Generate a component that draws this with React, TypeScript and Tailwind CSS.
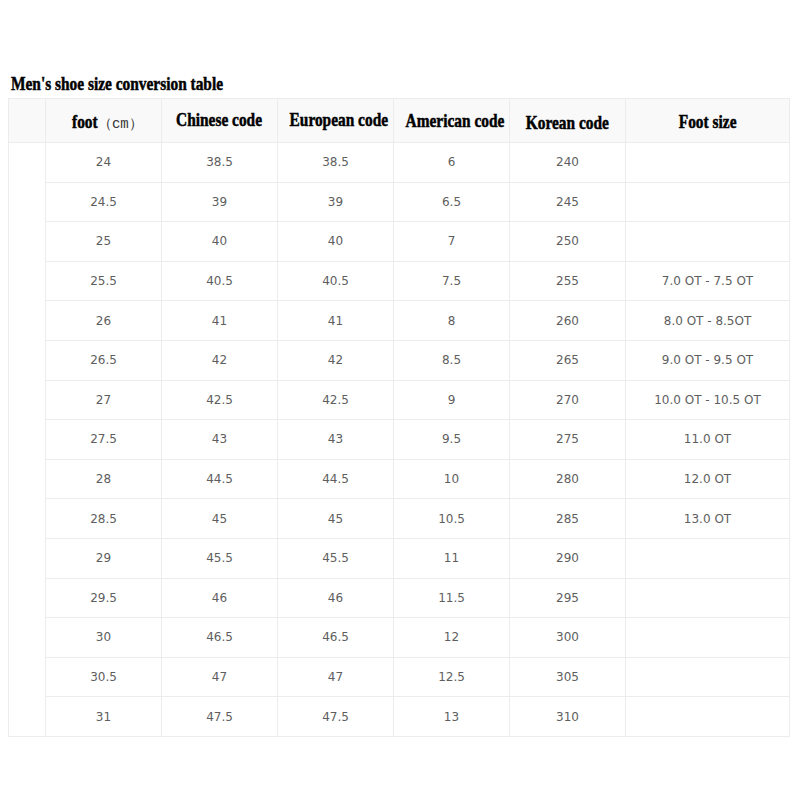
import React from 'react';

const ROWS: string[][] = [
  ['24', '38.5', '38.5', '6', '240', ''],
  ['24.5', '39', '39', '6.5', '245', ''],
  ['25', '40', '40', '7', '250', ''],
  ['25.5', '40.5', '40.5', '7.5', '255', '7.0 OT - 7.5 OT'],
  ['26', '41', '41', '8', '260', '8.0 OT - 8.5OT'],
  ['26.5', '42', '42', '8.5', '265', '9.0 OT - 9.5 OT'],
  ['27', '42.5', '42.5', '9', '270', '10.0 OT - 10.5 OT'],
  ['27.5', '43', '43', '9.5', '275', '11.0 OT'],
  ['28', '44.5', '44.5', '10', '280', '12.0 OT'],
  ['28.5', '45', '45', '10.5', '285', '13.0 OT'],
  ['29', '45.5', '45.5', '11', '290', ''],
  ['29.5', '46', '46', '11.5', '295', ''],
  ['30', '46.5', '46.5', '12', '300', ''],
  ['30.5', '47', '47', '12.5', '305', ''],
  ['31', '47.5', '47.5', '13', '310', ''],
];

// condensed heavy serif look for the headings
const head =
  "font-['Liberation_Serif',serif] font-bold text-[19px] text-black [-webkit-text-stroke:0.5px_black] inline-block scale-x-[0.81] leading-[20px]";

function Head({ children, className = '' }: { children: React.ReactNode; className?: string }) {
  return (
    <th className={`border border-[#ececec] whitespace-nowrap font-normal ${className}`}>
      <span className={head}>{children}</span>
    </th>
  );
}

export default function App() {
  return (
    <div className="w-[800px] h-[800px] bg-white pt-[72px]">
      <h1 className="h-[26px] pl-[11px] whitespace-nowrap">
        <span className={`${head} origin-left`}>Men's shoe size conversion table</span>
      </h1>

      <table className="ml-[8px] w-[781px] border-collapse table-fixed">
        <colgroup>
          <col className="w-[37px]" />
          <col className="w-[116px]" />
          <col className="w-[116px]" />
          <col className="w-[116px]" />
          <col className="w-[116px]" />
          <col className="w-[116px]" />
          <col className="w-[164px]" />
        </colgroup>
        <thead>
          <tr className="h-[44px] bg-[#f9f9f9]">
            <th className="border border-[#ececec]" />
            <th className="border border-[#ececec] whitespace-nowrap font-normal pt-[4px] pl-[2px]">
              <span className={`${head} origin-right`}>foot</span>
              <span className="font-['Liberation_Mono',monospace] text-[14px] text-[#333]">（cm）</span>
            </th>
            <Head className="pb-[2px]">Chinese code</Head>
            <Head className="pb-[2px]">European code</Head>
            <Head>American code</Head>
            <Head className="pt-[4px]">Korean code</Head>
            <Head className="pt-[2px]">Foot size</Head>
          </tr>
        </thead>
        <tbody className="font-['DejaVu_Sans','Verdana',sans-serif] text-[12px] text-[#5e5e5e]">
          {ROWS.map((row, i) => (
            <tr key={i} className="h-[39.6px]">
              {i === 0 && <td rowSpan={ROWS.length} className="border border-[#ececec]" />}
              {row.map((cell, j) => (
                <td key={j} className="border border-[#ececec] text-center">
                  {cell}
                </td>
              ))}
            </tr>
          ))}
        </tbody>
      </table>
    </div>
  );
}
